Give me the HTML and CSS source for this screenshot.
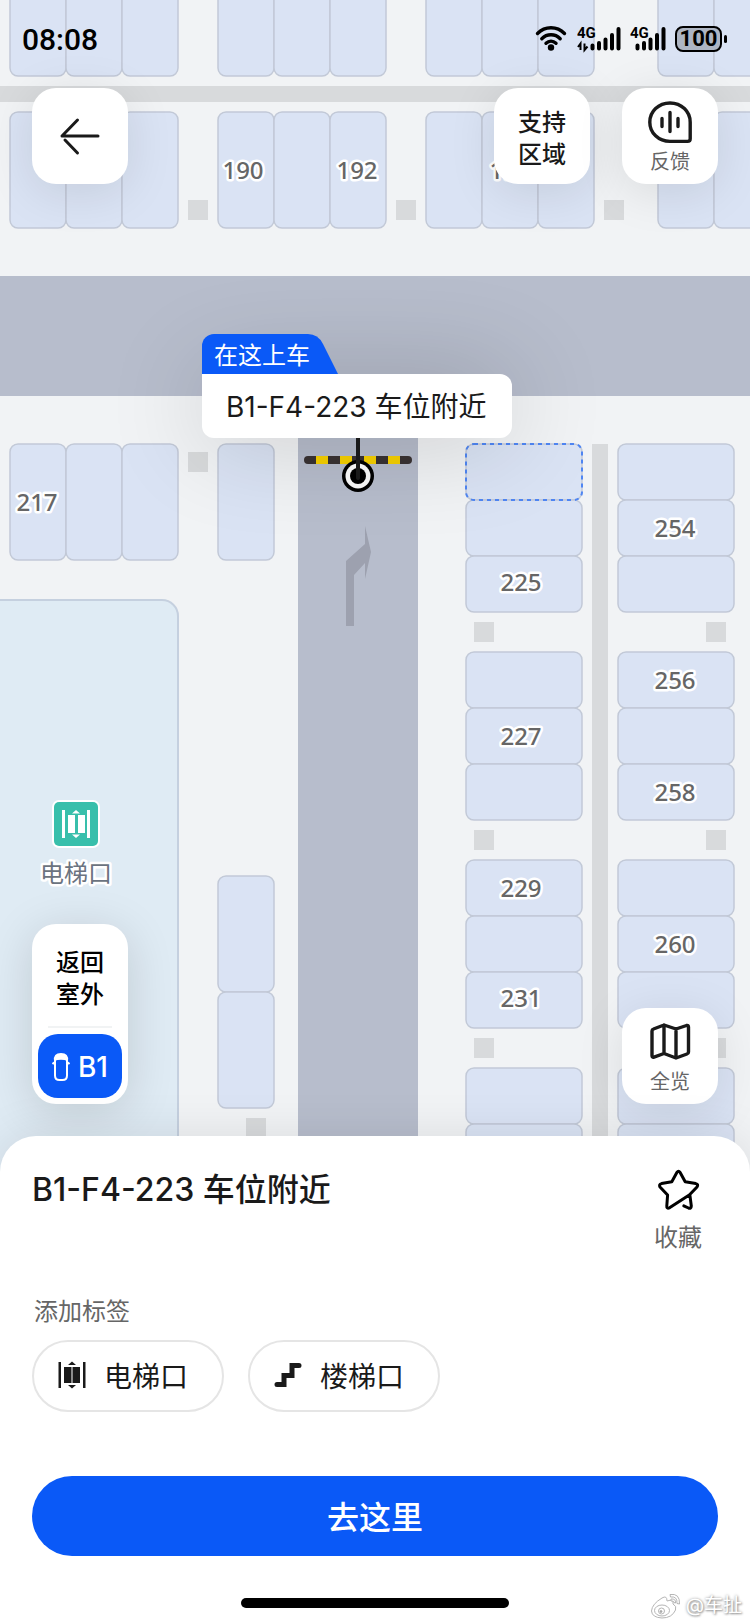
FILE: index.html
```html
<!DOCTYPE html>
<html lang="zh-CN">

<head>
    <meta charset="utf-8" />
    <meta name="viewport" content="width=device-width, initial-scale=1.0">
    <title>B1-F4-223 车位附近</title>
    <link rel="stylesheet" href="styles.css">
</head>

<body>
    <div class="screen">
        <div class="map">
            <svg class="map-canvas" viewBox="0 0 750 1624" preserveAspectRatio="xMidYMin slice">
                <defs>
                    <rect id="sv" class="slot" width="56" height="116" rx="8" />
                    <rect id="sh" class="slot" width="116" height="56" rx="8" />
                    <rect id="pillar" class="wall" width="20" height="20" />
                    <g id="row3">
                        <use href="#sv" /><use href="#sv" x="56" /><use href="#sv" x="112" />
                    </g>
                    <g id="col3">
                        <use href="#sh" /><use href="#sh" y="56" /><use href="#sh" y="112" />
                    </g>
                </defs>

                <!-- walls and roads -->
                <rect class="wall" y="86" width="750" height="16" />
                <rect class="wall" x="592" y="444" width="16" height="760" />
                <rect class="road" y="276" width="750" height="120" />
                <rect class="road" x="298" y="396" width="120" height="800" />
                <path class="building" d="M-10 600H162a16 16 0 0 1 16 16V1300H-10z" />

                <!-- top rows -->
                <use href="#row3" x="10" y="-40" />
                <use href="#row3" x="218" y="-40" />
                <use href="#row3" x="426" y="-40" />
                <use href="#row3" x="658" y="-40" />
                <use href="#row3" x="10" y="112" />
                <use href="#row3" x="218" y="112" />
                <use href="#row3" x="426" y="112" />
                <use href="#row3" x="658" y="112" />
                <use href="#pillar" x="188" y="200" />
                <use href="#pillar" x="396" y="200" />
                <use href="#pillar" x="604" y="200" />

                <!-- left side -->
                <use href="#row3" x="10" y="444" />
                <use href="#sv" x="218" y="444" />
                <use href="#pillar" x="188" y="452" />
                <use href="#sv" x="218" y="876" />
                <use href="#sv" x="218" y="992" />
                <use href="#pillar" x="246" y="1118" />

                <!-- right side -->
                <use href="#col3" x="466" y="444" />
                <use href="#col3" x="466" y="652" />
                <use href="#col3" x="466" y="860" />
                <use href="#col3" x="466" y="1068" />
                <use href="#col3" x="618" y="444" />
                <use href="#col3" x="618" y="652" />
                <use href="#col3" x="618" y="860" />
                <use href="#col3" x="618" y="1068" />
                <use href="#pillar" x="474" y="622" />
                <use href="#pillar" x="474" y="830" />
                <use href="#pillar" x="474" y="1038" />
                <use href="#pillar" x="706" y="622" />
                <use href="#pillar" x="706" y="830" />
                <use href="#pillar" x="706" y="1038" />
                <rect class="slot-picked" x="466" y="444" width="116" height="56" rx="8" />

                <path class="road-arrow" d="M346 626V561L365 544V526L371 552L365 579V563L354 575V626z" />

                <g class="slot-no">
                    <text x="243" y="179">190</text>
                    <text x="357" y="179">192</text>
                    <text x="510" y="179">195</text>
                    <text x="37" y="511">217</text>
                    <text x="521" y="591">225</text>
                    <text x="521" y="745">227</text>
                    <text x="521" y="897">229</text>
                    <text x="521" y="1007">231</text>
                    <text x="675" y="537">254</text>
                    <text x="675" y="689">256</text>
                    <text x="675" y="801">258</text>
                    <text x="675" y="953">260</text>
                </g>

                <!-- elevator -->
                <rect x="52" y="800" width="48" height="48" rx="7" fill="#fff" />
                <rect x="54" y="802" width="44" height="44" rx="5" fill="#38bfab" />
                <path d="M62 810h3v28h-3zM87 810h3v28h-3zM68 815h7v18h-7zM78 815h7v18h-7zM72 813.500l4-3.500l4 3.500zM72 834.500l4 3.500l4-3.500z" fill="#fff" />
                <text class="poi" x="76" y="882">电梯口</text>
            </svg>
            <div class="callout">
                <div class="callout-tag">
                    <svg class="callout-shape" viewBox="0 0 136 40"><path d="M0 40V12A12 12 0 0 1 12 0H106Q116 0 121 10L136 40z" fill="#0a59f7" /></svg>
                    <span>在这上车</span>
                </div>
                <div class="callout-name">B1-F4-223 车位附近</div>
                <svg class="pin" viewBox="0 0 108 56">
                    <clipPath id="bar"><rect y="18" width="108" height="8" rx="4" /></clipPath>
                    <g clip-path="url(#bar)">
                        <rect y="18" width="108" height="8" fill="#363030" />
                        <path d="M12 18h12v8h-12zM36 18h12v8h-12zM60 18h12v8h-12zM84 18h12v8h-12z" fill="#e9c500" />
                    </g>
                    <circle cx="54" cy="38" r="16" />
                    <circle cx="54" cy="38" r="12.500" fill="#f2f2f2" />
                    <circle cx="54" cy="38" r="8" />
                    <path d="M54 0V40" stroke="#1a1a1a" stroke-width="4" stroke-linecap="round" />
                </svg>
            </div>
        </div>

        <div class="status">
            <span class="clock">08:08</span>
            <div class="status-icons">
                <svg width="33" height="28" viewBox="0 0 33 28" fill="none" stroke="#000" stroke-width="3.400" stroke-linecap="round">
                    <path d="M2.500 8.500C10 .800 22 .800 29.500 8.500M6.800 13.700C12 8.500 20 8.500 25.200 13.700M11 18.300C14 15.500 18 15.500 21 18.300" />
                    <circle cx="16" cy="22.500" r="3.200" fill="#000" stroke="none" />
                </svg>
                <svg width="44" height="36" viewBox="0 -4 44 36">
                    <text class="net" x="0" y="13">4G</text>
                    <path d="M3.500 25v-6.500l-2.500 3.500M7.500 18.500v6.500l3-3.500" fill="none" stroke="#000" stroke-width="2" />
                    <path d="M15.500 20.500v3M22 18v5.500M28.500 14.500v9M35 10v13.500M41.500 4v19.500" stroke="#000" stroke-width="4" stroke-linecap="round" />
                </svg>
                <svg width="36" height="36" viewBox="0 -4 36 36">
                    <text class="net" x="0" y="13">4G</text>
                    <path d="M7.500 20.500v3M14 18v5.500M20.500 14.500v9M27 10v13.500M33.500 4v19.500" stroke="#000" stroke-width="4" stroke-linecap="round" />
                </svg>
                <span class="battery">100</span>
            </div>
        </div>

        <div class="toolbar">
            <button class="tile" aria-label="返回">
                <svg width="44" height="44" viewBox="0 0 44 44" fill="none" stroke="#1a1a1a" stroke-width="3" stroke-linecap="round" stroke-linejoin="round">
                    <path d="M40 22H4L19.500 6M7 26L19.500 39" />
                </svg>
            </button>
            <div class="toolbar-right">
                <button class="tile tile-text">支持<br>区域</button>
                <button class="tile tile-icon">
                    <svg width="44" height="44" viewBox="0 0 44 44" fill="none" stroke="#1a1a1a" stroke-width="3.400" stroke-linecap="round" stroke-linejoin="round">
                        <path d="M22 3C10.500 3 1.800 11.500 1.800 22.200S10.500 41.400 22 41.400H39.500Q42.200 41.400 42.200 38.800V22.200C42.200 11.500 33.500 3 22 3z" />
                        <path d="M14 18.500v8M22 12.500v19M30 18.500v8" />
                    </svg>
                    <span>反馈</span>
                </button>
            </div>
        </div>

        <div class="side-tools">
            <div class="floors">
                <button class="outdoor">返回<br>室外</button>
                <button class="floor">
                    <svg width="18" height="30" viewBox="0 0 18 30">
                        <path d="M3 9.500Q2.800 4 9 4T15 9.500V23.500Q15 28 10.500 28H7.500Q3 28 3 23.500zM.500 12L3 10M17.500 12L15 10" fill="none" stroke="#fff" stroke-width="2" />
                        <path d="M2 9Q1 1 9 1T16 9Q9 6.500 2 9z" fill="#fff" />
                    </svg>
                    B1
                </button>
            </div>
            <button class="tile tile-icon">
                <svg width="44" height="44" viewBox="0 0 44 44" fill="none" stroke="#1a1a1a" stroke-width="3.400" stroke-linecap="round" stroke-linejoin="round">
                    <path d="M4 11Q4 9.500 5.500 9L16 5L28 9L38.500 5.500Q40.500 5 40.500 7V32Q40.500 33.500 39 34L28 38L16 33.500L6 37.200Q4 37.800 4 35.500zM16 5V33.500M28 9V38" />
                </svg>
                <span>全览</span>
            </button>
        </div>

        <div class="sheet">
            <div class="sheet-head">
                <h1>B1-F4-223 车位附近</h1>
                <button class="fav">
                    <svg width="44" height="44" viewBox="0 0 44 44" fill="none" stroke="#000" stroke-width="3" stroke-linecap="round" stroke-linejoin="round">
                        <path d="M34 26.500L13.500 39.800Q10.500 41 10.800 37.800L11.600 27L4 19Q2.600 16.300 5.500 15.600L15.800 13.800L21 4.300Q22.500 2 24 4.300L29.200 13.800L39.800 15.600Q42.800 16.300 41 19L33.800 26.500L35.300 38Q35.200 41 32.500 40L27.800 37.800" />
                    </svg>
                    <span>收藏</span>
                </button>
            </div>
            <div class="tag-title">添加标签</div>
            <div class="tags">
                <button class="tag">
                    <svg width="32" height="32" viewBox="0 0 32 32" fill="#1a1a1a">
                        <path d="M2.500 3h2.500v26h-2.500zM27 3h2.500v26h-2.500zM8 8h7.500v16h-7.500zM16.500 8h7.500v16h-7.500zM12 6l4-3.500l4 3.500zM12 26l4 3.500l4-3.500z" />
                    </svg>
                    电梯口
                </button>
                <button class="tag">
                    <svg width="32" height="32" viewBox="0 0 32 32" fill="none" stroke="#1a1a1a" stroke-width="5" stroke-linecap="round">
                        <path d="M5 25.500H12V16.500H20V6.500H27" />
                    </svg>
                    楼梯口
                </button>
            </div>
            <button class="go">去这里</button>
            <div class="home-bar"></div>
        </div>

        <div class="watermark">
            <svg width="32" height="28" viewBox="0 0 32 28" fill="#fff" stroke="#b5b5b5" stroke-width="1">
                <path d="M12 6Q17 3 17 9Q24 6.500 23 12Q27 14 25.500 18Q22 26 12 26Q2 25.500 1.500 19Q2 12 12 6z" />
                <ellipse cx="12" cy="18.500" rx="7.500" ry="5.500" />
                <circle cx="11.500" cy="19" r="3" /><circle cx="11" cy="19.500" r="1" fill="#999" />
                <path d="M20 2.500Q30 1 29.500 12L27 11.500Q27.500 4 20.500 5zM21 7Q26 6.500 25.500 11L23.800 10.500Q24 8.500 21 9z" />
            </svg>
            <span>@车扯</span>
        </div>
    </div>
</body>

</html>
```
FILE: styles.css
```css
* {
    box-sizing: border-box;
}

body {
    margin: 0;
    font-family: Inter, "Noto Sans CJK SC", sans-serif;
    color: #1a1a1a;
    background: #f1f3f5;
}

button {
    margin: 0;
    padding: 0;
    border: none;
    font-family: inherit;
    color: inherit;
    background: #fff;
    cursor: pointer;
}

svg {
    display: block;
    flex: none;
}

.screen {
    position: relative;
    display: flex;
    flex-direction: column;
    min-height: 100vh;
    overflow: hidden;
}

/* map */
.map {
    position: absolute;
    inset: 0;
}

.map-canvas {
    width: 100%;
    height: 100%;
}

.slot {
    fill: #dae3f4;
    stroke: #c2c9d7;
    stroke-width: 1.5px;
}

.slot-picked {
    fill: none;
    stroke: #4f86f3;
    stroke-width: 2px;
    stroke-dasharray: 4 4;
}

.wall {
    fill: #d8dadc;
}

.road {
    fill: #b7bdcc;
}

.road-arrow {
    fill: #9da1af;
}

.building {
    fill: #dfebf4;
    stroke: #c5d0df;
    stroke-width: 2px;
}

.slot-no,
.poi {
    font-family: "Noto Sans", "Noto Sans CJK SC", sans-serif;
    font-size: 24px;
    font-weight: 500;
    text-anchor: middle;
    fill: #666;
    stroke: #fff;
    stroke-width: 5px;
    stroke-linejoin: round;
    paint-order: stroke;
}

.poi {
    font-weight: 400;
    fill: #6b7380;
}

.callout {
    position: absolute;
    top: 334px;
    left: calc(50% - 173px);
}

.callout-tag {
    position: relative;
    z-index: 1;
    width: 136px;
    height: 40px;
    padding-left: 12px;
    font-size: 24px;
    line-height: 44px;
    color: #fff;
}

.callout-tag span {
    position: relative;
}

.callout-shape {
    position: absolute;
    top: 0;
    left: 0;
    width: 136px;
    height: 40px;
}

.callout-name {
    padding: 2px 26px 0 24px;
    border-radius: 0 12px 12px 12px;
    font-size: 28px;
    line-height: 62px;
    white-space: nowrap;
    background: #fff;
    box-shadow: 0 0 100px rgba(0, 0, 0, 0.2);
}

.pin {
    width: 108px;
    height: 56px;
    margin-left: 102px;
}

/* status bar */
.status {
    position: relative;
    display: flex;
    align-items: center;
    justify-content: space-between;
    height: 78px;
    padding: 0 28px 0 22px;
    color: #000;
}

.clock {
    font-family: Roboto, sans-serif;
    font-size: 30px;
    font-weight: 500;
}

.status-icons {
    display: flex;
    align-items: center;
    gap: 9px;
}

.net {
    font-family: Roboto, sans-serif;
    font-size: 15px;
    font-weight: 700;
}

.battery {
    position: relative;
    width: 47px;
    height: 26px;
    border: 2px solid #000;
    border-radius: 8px;
    font-family: Roboto, sans-serif;
    font-size: 22px;
    font-weight: 700;
    line-height: 22px;
    text-align: center;
    background: #adb5c3;
}

.battery::after {
    content: "";
    position: absolute;
    top: 7px;
    right: -7px;
    width: 3px;
    height: 8px;
    border-radius: 2px;
    background: #000;
}

/* floating buttons */
.toolbar {
    position: relative;
    display: flex;
    justify-content: space-between;
    padding: 10px 32px 0;
}

.toolbar-right {
    display: flex;
    gap: 32px;
}

.tile {
    display: flex;
    flex-direction: column;
    align-items: center;
    justify-content: center;
    width: 96px;
    height: 96px;
    border-radius: 24px;
    box-shadow: 0 8px 48px rgba(0, 0, 0, 0.1);
}

.tile-text,
.outdoor {
    font-size: 24px;
    font-weight: 500;
    line-height: 32px;
}

.tile-text {
    padding-top: 6px;
}

.tile-icon {
    gap: 4px;
    padding-top: 4px;
    font-size: 20px;
    line-height: 28px;
    color: #666;
}

.side-tools {
    position: relative;
    display: flex;
    align-items: flex-end;
    justify-content: space-between;
    margin-top: auto;
    padding: 0 32px 32px;
}

.floors {
    display: flex;
    flex-direction: column;
    width: 96px;
    padding: 6px;
    border-radius: 24px;
    background: #fff;
    box-shadow: 0 8px 48px rgba(0, 0, 0, 0.14);
}

.outdoor {
    margin: 0 10px 6px;
    padding: 17px 0 15px;
    border-bottom: 2px solid #f1f3f4;
    color: #000;
}

.floor {
    display: flex;
    align-items: center;
    justify-content: center;
    gap: 8px;
    height: 64px;
    padding-top: 2px;
    border-radius: 20px;
    font-size: 28px;
    font-weight: 500;
    color: #fff;
    background: #0a59f7;
}

/* bottom sheet */
.sheet {
    position: relative;
    padding: 32px 32px 16px;
    border-radius: 36px 36px 0 0;
    background: #fff;
    box-shadow: 0 0 48px rgba(0, 0, 0, 0.1);
}

.sheet-head {
    display: flex;
    align-items: flex-start;
    justify-content: space-between;
}

.sheet h1 {
    margin: 0;
    font-size: 32px;
    font-weight: 500;
    line-height: 44px;
}

.fav {
    display: flex;
    flex-direction: column;
    align-items: center;
    gap: 10px;
    width: 80px;
    font-size: 24px;
    line-height: 32px;
    color: #666;
}

.tag-title {
    margin-top: 42px;
    padding-left: 2px;
    font-size: 24px;
    line-height: 32px;
    color: #666;
}

.tags {
    display: flex;
    gap: 24px;
    margin-top: 12px;
}

.tag {
    display: flex;
    align-items: center;
    gap: 16px;
    height: 72px;
    padding: 0 34px 2px 22px;
    border: 2px solid #e5e5e5;
    border-radius: 36px;
    font-size: 28px;
}

.go {
    display: block;
    width: 100%;
    height: 80px;
    margin-top: 64px;
    padding-bottom: 2px;
    border-radius: 40px;
    font-size: 32px;
    font-weight: 500;
    color: #fff;
    background: #0a59f7;
}

.home-bar {
    width: 268px;
    height: 10px;
    margin: 42px auto 0;
    border-radius: 5px;
    background: #000;
}

.watermark {
    position: absolute;
    right: 8px;
    bottom: 4px;
    display: flex;
    align-items: center;
    gap: 4px;
    font-size: 19px;
    line-height: 28px;
    color: #fff;
    text-shadow: 0 0 3px #999, 1px 1px 2px #999;
}
```
